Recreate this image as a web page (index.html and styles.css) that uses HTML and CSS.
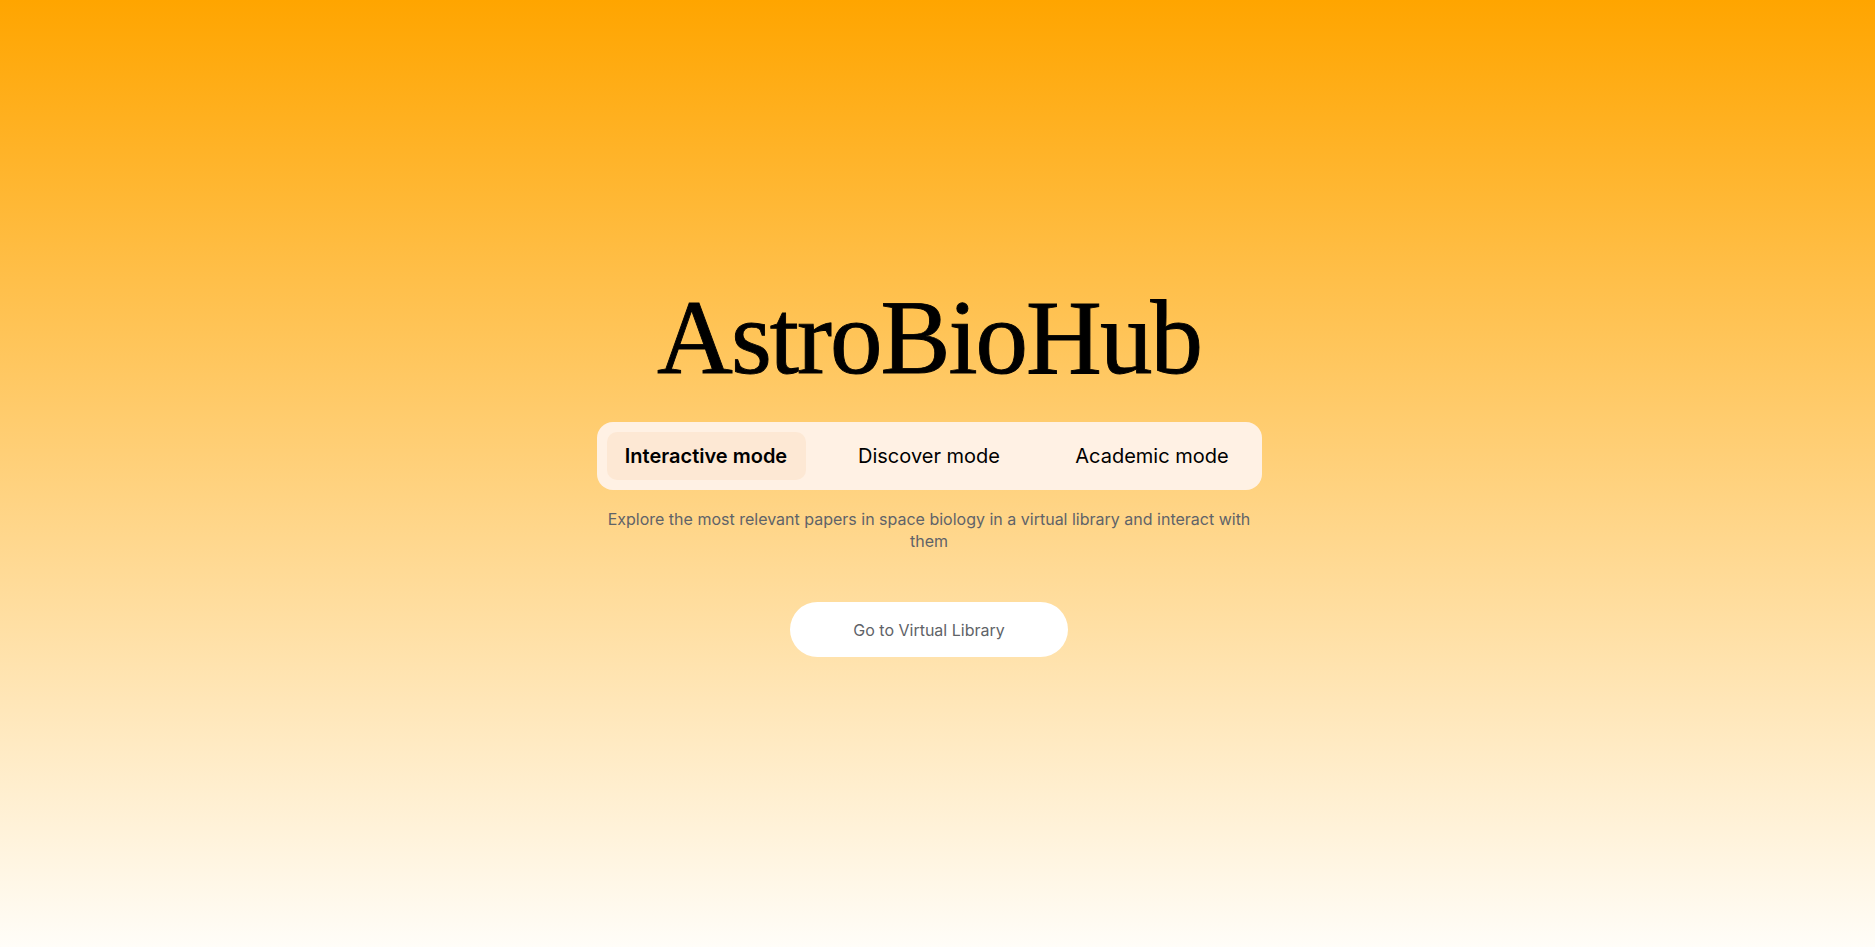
FILE: index.html
```html
<!DOCTYPE html>
<html lang="en">
<head>
<meta charset="utf-8">
<title>AstroBioHub</title>
<link rel="stylesheet" href="styles.css">
</head>
<body>
<main class="hero">
  <h1 class="title">AstroBioHub</h1>
  <nav class="modes">
    <button class="mode active">Interactive mode</button>
    <button class="mode">Discover mode</button>
    <button class="mode">Academic mode</button>
  </nav>
  <p class="desc">Explore the most relevant papers in space biology in a virtual library and interact with them</p>
  <button class="cta">Go to Virtual Library</button>
</main>
</body>
</html>
```
FILE: styles.css
```css
html, body {
  margin: 0;
  padding: 0;
  height: 100%;
}
body {
  background: linear-gradient(to bottom, #ffa500 0%, #fffdf8 100%);
  font-family: Inter, "Noto Sans", sans-serif;
  min-height: 947px;
}
.hero {
  display: flex;
  flex-direction: column;
  align-items: center;
  padding-top: 285px;
  padding-right: 17px;
}
.title {
  margin: 0;
  font-family: "Liberation Serif", "Times New Roman", serif;
  font-weight: 400;
  font-size: 105px;
  line-height: 106px;
  letter-spacing: -2px;
  color: #000;
  -webkit-text-stroke: 0.9px #000;
}
.modes {
  margin-top: 31px;
  display: grid;
  grid-template-columns: repeat(3, 199px);
  column-gap: 24px;
  padding: 10px;
  background: #fff1e4;
  border-radius: 16px;
}
.mode {
  height: 48px;
  border: 0;
  background: transparent;
  border-radius: 10px;
  font-family: Inter, "Noto Sans", sans-serif;
  font-size: 20px;
  font-weight: 400;
  color: #000;
  padding: 0;
  cursor: pointer;
}
.mode.active {
  background: #fde8d4;
  font-weight: 600;
}
.desc {
  margin: 18px 0 0;
  width: 665px;
  text-align: center;
  font-size: 16px;
  line-height: 22px;
  color: #5f6368;
}
.cta {
  margin-top: 50px;
  width: 278px;
  height: 55px;
  border: 0;
  border-radius: 28px;
  background: #fff;
  font-family: Inter, "Noto Sans", sans-serif;
  font-size: 16px;
  color: #5f6368;
  cursor: pointer;
}
```
